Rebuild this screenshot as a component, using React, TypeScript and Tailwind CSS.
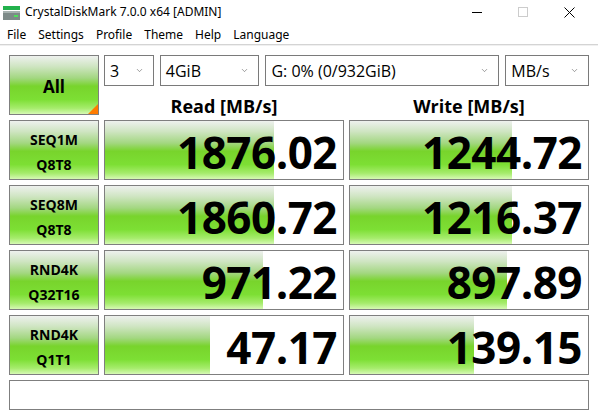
import { ChevronDown } from 'lucide-react'

const menu = ['File', 'Settings', 'Profile', 'Theme', 'Help', 'Language']

// green bar fill used by the buttons and the score meters
const green =
  'bg-[linear-gradient(to_bottom,#eef1ee_0%,#cfe5c2_18%,#a3d781_38%,#78d42c_52%,#7ddf34_75%,#a6ec6c_90%,#d6f9b4_100%)]'

const rows = [
  { name: 'SEQ1M', sub: 'Q8T8', read: '1876.02', readBar: 169, write: '1244.72', writeBar: 162 },
  { name: 'SEQ8M', sub: 'Q8T8', read: '1860.72', readBar: 169, write: '1216.37', writeBar: 162 },
  { name: 'RND4K', sub: 'Q32T16', read: '971.22', readBar: 158, write: '897.89', writeBar: 157 },
  { name: 'RND4K', sub: 'Q1T1', read: '47.17', readBar: 105, write: '139.15', writeBar: 124 },
]

function Combo({ value, width }: { value: string; width: string }) {
  return (
    <div
      className={`${width} h-[31px] border border-[#7a7a7a] bg-white flex items-center justify-between pl-[5px] pr-[9px]`}
    >
      <span className="text-[16px] leading-none text-black">{value}</span>
      <ChevronDown className="w-[9px] h-[9px] text-[#555]" strokeWidth={1.5} />
    </div>
  )
}

function Score({ value, bar }: { value: string; bar: number }) {
  return (
    <div className="relative h-[60px] border border-[#7f7f7f] bg-white">
      <div className={`absolute left-0 top-0 bottom-0 ${green}`} style={{ width: bar }} />
      <div className="relative h-full flex items-center justify-end pr-[6px] pt-[3px] text-[44px] font-bold leading-none text-black tracking-[-0.5px]">
        {value}
      </div>
    </div>
  )
}

export default function App() {
  return (
    <div className="w-[598px] h-[419px] bg-white overflow-hidden font-['Open_Sans','Noto_Sans',sans-serif] text-black">
      {/* title bar */}
      <div className="h-[24px] flex items-center">
        <svg width="18" height="16" viewBox="0 0 18 16" className="ml-[3px] mt-[2px]">
          <rect x="0" y="1" width="17" height="4" fill="#22b14c" />
          <rect x="0" y="6" width="17" height="9" fill="#7d8a88" />
          <rect x="0" y="6" width="17" height="2" fill="#a7b2b0" />
          <rect x="11" y="10" width="4" height="2" fill="#4fe05a" />
        </svg>
        <span className="ml-[4px] text-[12px] font-['Noto_Sans',sans-serif]">
          CrystalDiskMark 7.0.0 x64 [ADMIN]
        </span>
        <div className="ml-auto flex items-center h-full">
          <div className="w-[46px] flex justify-center">
            <div className="w-[10px] h-px bg-black" />
          </div>
          <div className="w-[46px] flex justify-center">
            <div className="w-[10px] h-[10px] border border-[#cccccc]" />
          </div>
          <div className="w-[46px] flex justify-center mr-[6px]">
            <svg width="11" height="11" viewBox="0 0 11 11">
              <path d="M0.5 0.5 L10.5 10.5 M10.5 0.5 L0.5 10.5" stroke="#000" strokeWidth="1" />
            </svg>
          </div>
        </div>
      </div>

      {/* menu */}
      <div className="h-[20px] flex items-center pl-px pt-[2px] text-[12px] font-['Noto_Sans',sans-serif]">
        {menu.map((m) => (
          <span key={m} className="px-[6px]">
            {m}
          </span>
        ))}
      </div>
      <div className="h-px bg-[#d4d4d4]" />
      <div className="h-px bg-[#f0f0f0]" />

      {/* main panel */}
      <div className="pl-[9px] pt-[9px] grid grid-cols-[90px_240px_240px] gap-x-[5px] gap-y-[5px]">
        <div
          className={`relative h-[60px] border border-[#7f7f7f] ${green} flex items-center justify-center pt-[4px] text-[17px] font-bold`}
        >
          All
          <div className="absolute right-0 bottom-0 w-0 h-0 border-l-[10px] border-l-transparent border-b-[10px] border-b-[#ff7b00]" />
        </div>
        <div className="col-span-2 h-[60px] flex flex-col">
          <div className="flex gap-[6px]">
            <Combo value="3" width="w-[50px]" />
            <Combo value="4GiB" width="w-[100px]" />
            <Combo value="G: 0% (0/932GiB)" width="w-[235px]" />
            <Combo value="MB/s" width="w-[84px]" />
          </div>
          <div className="flex-1 grid grid-cols-2 gap-x-[5px] items-end text-[18px] font-bold leading-none text-center">
            <div>Read [MB/s]</div>
            <div>Write [MB/s]</div>
          </div>
        </div>

        {rows.map((r, i) => (
          <div key={i} className="contents">
            <div
              className={`h-[60px] border border-[#7f7f7f] ${green} flex flex-col items-center justify-center pt-[3px] text-[14px] font-bold leading-[25px]`}
            >
              <span>{r.name}</span>
              <span>{r.sub}</span>
            </div>
            <Score value={r.read} bar={r.readBar} />
            <Score value={r.write} bar={r.writeBar} />
          </div>
        ))}

        <div className="col-span-3 h-[30px] border border-[#7f7f7f] bg-white" />
      </div>
    </div>
  )
}
